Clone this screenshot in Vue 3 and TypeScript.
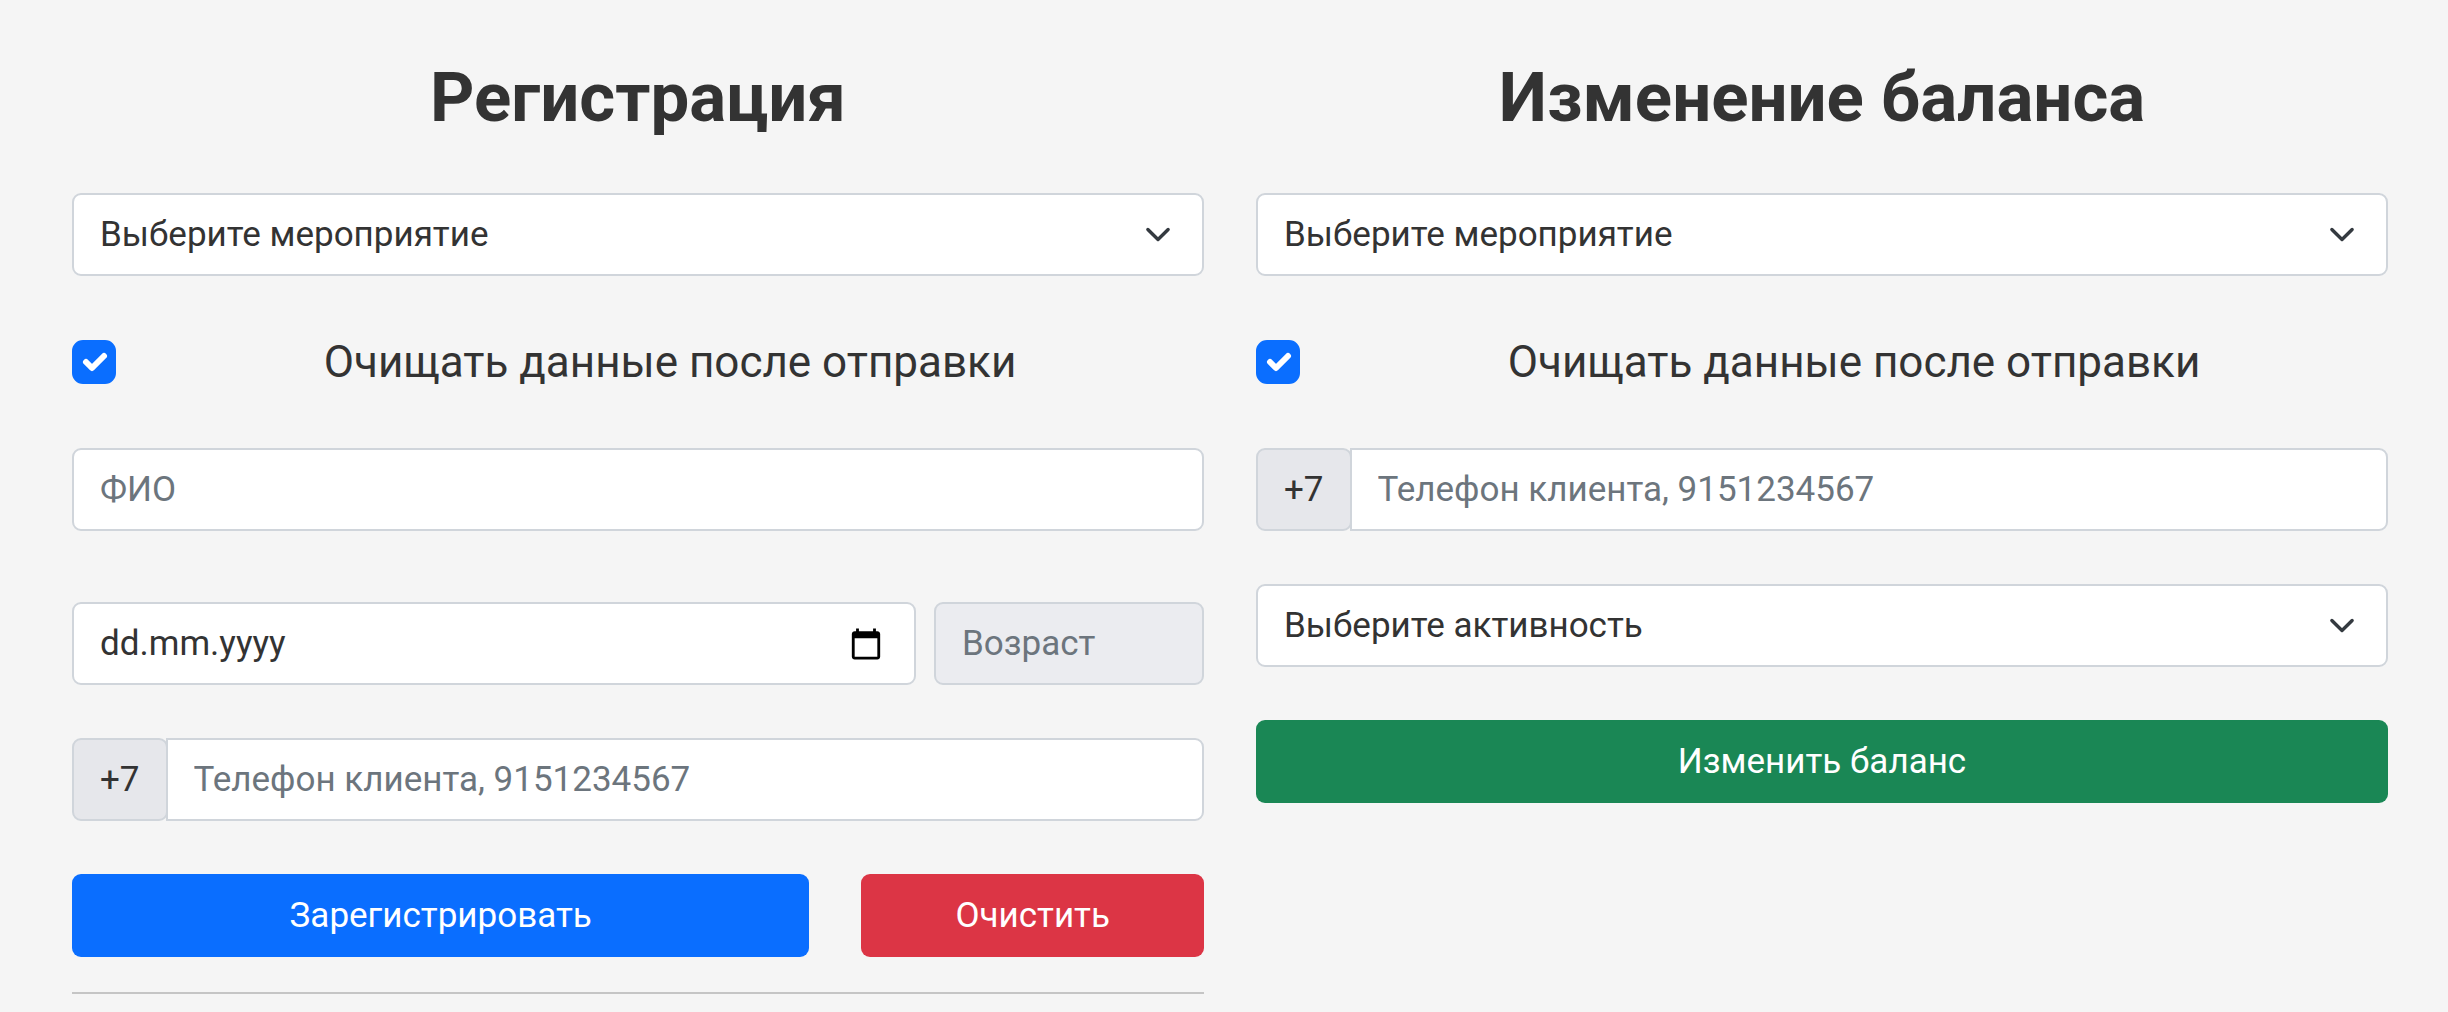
<script setup lang="ts">
import { ref } from 'vue'

const regEvent = ref('')
const regClear = ref(true)
const fullName = ref('')
const birthDate = ref('')
const age = ref('')
const regPhone = ref('')

const balEvent = ref('')
const balClear = ref(true)
const balPhone = ref('')
const activity = ref('')

function resetRegistration(): void {
  fullName.value = ''
  birthDate.value = ''
  age.value = ''
  regPhone.value = ''
}

function submitRegistration(): void {
  if (regClear.value) resetRegistration()
}

function submitBalance(): void {
  if (balClear.value) {
    balPhone.value = ''
    activity.value = ''
  }
}
</script>

<template>
  <main class="page">
    <form class="panel" @submit.prevent="submitRegistration">
      <h1 class="title">Регистрация</h1>

      <select v-model="regEvent" class="field select" aria-label="Мероприятие">
        <option value="">Выберите мероприятие</option>
      </select>

      <div class="check-row">
        <input id="reg-clear" v-model="regClear" class="check" type="checkbox" />
        <label class="check-label" for="reg-clear">Очищать данные после отправки</label>
      </div>

      <input v-model="fullName" class="field" type="text" placeholder="ФИО" aria-label="ФИО" />

      <div class="birth-row">
        <div class="date-box">
          <input v-model="birthDate" class="field date" type="text" placeholder="dd.mm.yyyy" aria-label="Дата рождения" />
          <button class="calendar" type="button" aria-label="Открыть календарь">
            <svg viewBox="0 0 24 24" width="34" height="34" aria-hidden="true">
              <path d="M20 3h-1V1h-2v2H7V1H5v2H4c-1.1 0-2 .9-2 2v16c0 1.1.9 2 2 2h16c1.1 0 2-.9 2-2V5c0-1.1-.9-2-2-2zm0 18H4V8h16v13z" />
            </svg>
          </button>
        </div>
        <input v-model="age" class="field age" type="text" placeholder="Возраст" aria-label="Возраст" disabled />
      </div>

      <div class="phone">
        <label class="prefix" for="reg-phone">+7</label>
        <input id="reg-phone" v-model="regPhone" class="field phone-input" type="tel" placeholder="Телефон клиента, 9151234567" />
      </div>

      <div class="footer">
        <div class="actions">
          <button class="btn btn-primary" type="submit">Зарегистрировать</button>
          <button class="btn btn-danger" type="button" @click="resetRegistration">Очистить</button>
        </div>
        <hr class="divider" />
      </div>
    </form>

    <form class="panel" @submit.prevent="submitBalance">
      <h1 class="title">Изменение баланса</h1>

      <select v-model="balEvent" class="field select" aria-label="Мероприятие">
        <option value="">Выберите мероприятие</option>
      </select>

      <div class="check-row">
        <input id="bal-clear" v-model="balClear" class="check" type="checkbox" />
        <label class="check-label" for="bal-clear">Очищать данные после отправки</label>
      </div>

      <div class="phone">
        <label class="prefix" for="bal-phone">+7</label>
        <input id="bal-phone" v-model="balPhone" class="field phone-input" type="tel" placeholder="Телефон клиента, 9151234567" />
      </div>

      <select v-model="activity" class="field select" aria-label="Активность">
        <option value="">Выберите активность</option>
      </select>

      <button class="btn btn-success" type="submit">Изменить баланс</button>
    </form>
  </main>
</template>

<style>
body {
  background: #f5f5f5;
}
</style>

<style scoped>
.page,
.page * {
  box-sizing: border-box;
}

.page {
  display: grid;
  grid-template-columns: 1fr 1fr;
  align-items: start;
  gap: 52px;
  padding: 56px 60px 18px 72px;
  color: #333;
  font-family: Roboto, sans-serif;
  font-size: 35px;
  line-height: 53px;
}

.panel {
  display: flex;
  flex-direction: column;
  gap: 53px;
  min-width: 0;
}

.title {
  margin: 0;
  font-size: 69px;
  font-weight: 700;
  line-height: 84px;
  text-align: center;
}

.field {
  width: 100%;
  min-width: 0;
  height: 83px;
  margin: 0;
  padding: 13px 26px;
  border: 2px solid #d0d5db;
  border-radius: 9px;
  background-color: #fff;
  color: #333;
  font: inherit;
  outline: none;
}

.field::placeholder {
  color: #6c757d;
  opacity: 1;
}

.select {
  appearance: none;
  background-image: url("data:image/svg+xml,%3Csvg xmlns='http://www.w3.org/2000/svg' viewBox='0 0 16 16'%3E%3Cpath fill='none' stroke='%23343a40' stroke-linecap='round' stroke-linejoin='round' stroke-width='2' d='m2 5 6 6 6-6'/%3E%3C/svg%3E");
  background-repeat: no-repeat;
  background-position: right 26px center;
  background-size: 36px 27px;
}

.check-row {
  display: flex;
  align-items: center;
  gap: 20px;
}

.check {
  appearance: none;
  flex: none;
  width: 44px;
  height: 44px;
  margin: 0;
  border: 2px solid #d0d5db;
  border-radius: 11px;
  background-color: #fff;
}

.check:checked {
  border-color: #0a6eff;
  background-color: #0a6eff;
  background-image: url("data:image/svg+xml,%3Csvg xmlns='http://www.w3.org/2000/svg' viewBox='0 0 20 20'%3E%3Cpath fill='none' stroke='%23fff' stroke-linecap='round' stroke-linejoin='round' stroke-width='3' d='m6 10 3 3 6-6'/%3E%3C/svg%3E");
  background-repeat: no-repeat;
  background-position: center;
  background-size: contain;
}

.check-label {
  flex: 1;
  font-size: 44px;
  line-height: 66px;
  text-align: center;
}

.birth-row {
  display: flex;
  gap: 18px;
  margin-top: 18px;
}

.date-box {
  position: relative;
  flex: 1;
  min-width: 0;
}

.date {
  display: block;
  padding-right: 80px;
}

.date::placeholder {
  color: #333;
}

.calendar {
  position: absolute;
  top: 0;
  right: 33px;
  bottom: 0;
  display: flex;
  align-items: center;
  padding: 0;
  border: 0;
  background: none;
  color: #000;
  cursor: pointer;
}

.calendar svg {
  display: block;
  fill: currentColor;
}

.age {
  flex: none;
  width: calc(25% - 13px);
  background-color: #ebecf0;
}

.phone {
  display: flex;
}

.prefix {
  flex: none;
  padding: 13px 26px;
  border: 2px solid #d0d5db;
  border-radius: 9px;
  background: #e6e7eb;
}

.phone-input {
  flex: 1;
  margin-left: -2px;
  border-top-left-radius: 0;
  border-bottom-left-radius: 0;
}

.footer {
  display: flex;
  flex-direction: column;
  gap: 35px;
}

.actions {
  display: flex;
  gap: 52px;
}

.btn {
  height: 83px;
  padding: 15px 28px;
  border: 0;
  border-radius: 9px;
  color: #fff;
  font: inherit;
  text-align: center;
  cursor: pointer;
}

.btn-primary {
  flex: 1;
  background-color: #0a6eff;
}

.btn-danger {
  flex: none;
  width: calc((100% + 52px) / 3 - 52px);
  background-color: #dc3545;
}

.btn-success {
  background-color: #1a8755;
}

.divider {
  width: 100%;
  height: 2px;
  margin: 0;
  border: 0;
  background: #c5c5c5;
}
</style>
